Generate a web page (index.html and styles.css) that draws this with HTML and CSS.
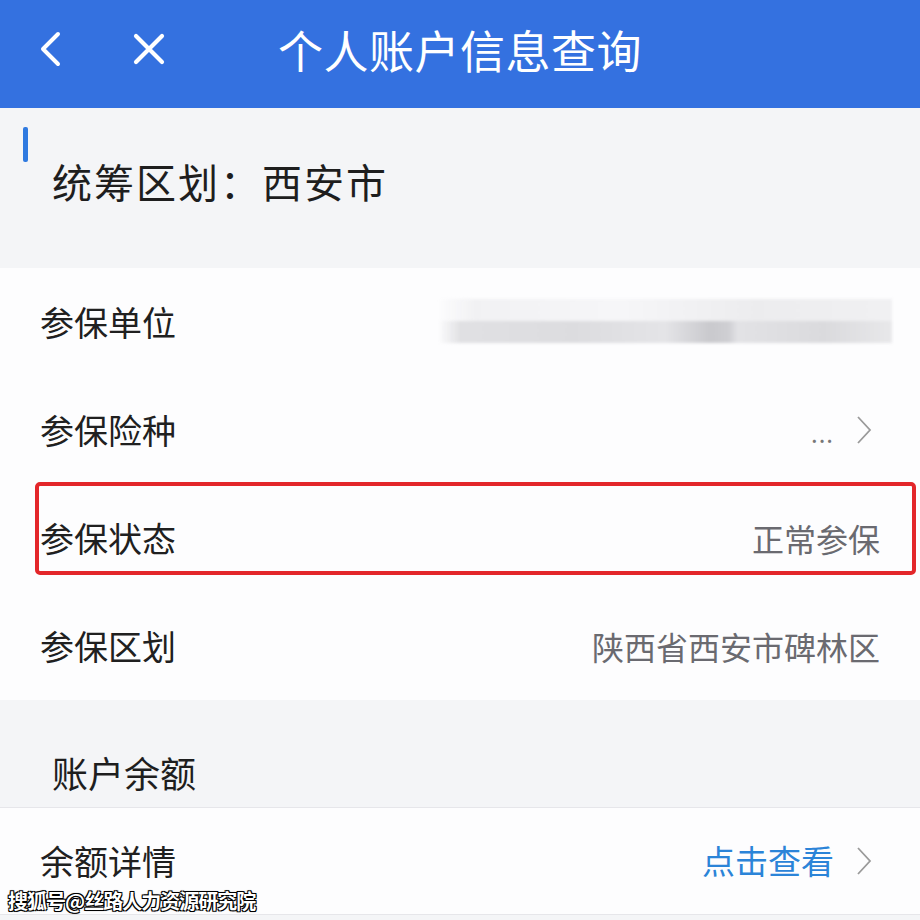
FILE: index.html
```html
<!DOCTYPE html>
<html lang="zh-CN">
<head>
<meta charset="utf-8">
<title>个人账户信息查询</title>
<link rel="stylesheet" href="styles.css">
</head>
<body>
<div class="page">
  <header class="topbar">
    <div class="nav-icons">
      <svg class="icon-back" width="24" height="36" viewBox="0 0 24 36"><polyline points="20,3 5,18 20,33" fill="none" stroke="#fff" stroke-width="4" stroke-linecap="round" stroke-linejoin="round"/></svg>
      <svg class="icon-close" width="32" height="32" viewBox="0 0 32 32"><path d="M3 3 L29 29 M29 3 L3 29" fill="none" stroke="#fff" stroke-width="4.2" stroke-linecap="round"/></svg>
    </div>
    <h1 class="title">个人账户信息查询</h1>
    <div></div>
  </header>

  <section class="region">
    <div class="accent"></div>
    <div class="region-text">统筹区划：西安市</div>
  </section>

  <section class="card">
    <div class="row">
      <span class="label">参保单位</span>
      <span class="blurred"><span class="blur-top"></span><span class="blur-bottom"></span></span>
    </div>
    <div class="row with-chev">
      <span class="label">参保险种</span>
      <span class="value more">...</span>
      <svg class="chev" width="16" height="30" viewBox="0 0 16 30"><polyline points="2,2 14,15 2,28" fill="none" stroke="#9a9a9a" stroke-width="1.8"/></svg>
    </div>
    <div class="row highlighted">
      <span class="label">参保状态</span>
      <span class="value">正常参保</span>
      <div class="mark"></div>
    </div>
    <div class="row">
      <span class="label">参保区划</span>
      <span class="value">陕西省西安市碑林区</span>
    </div>
  </section>

  <section class="group-head">
    <div class="group-text">账户余额</div>
  </section>

  <section class="card card-bottom">
    <div class="row with-chev">
      <span class="label">余额详情</span>
      <span class="value link">点击查看</span>
      <svg class="chev" width="16" height="30" viewBox="0 0 16 30"><polyline points="2,2 14,15 2,28" fill="none" stroke="#9a9a9a" stroke-width="1.8"/></svg>
    </div>
  </section>

  <div class="watermark">搜狐号@丝路人力资源研究院</div>
</div>
</body>
</html>
```
FILE: styles.css
```css
html, body {
  margin: 0;
  padding: 0;
  background: #f4f5f7;
}
body {
  font-family: "Noto Sans CJK SC", "Noto Sans", sans-serif;
}
.page {
  position: relative;
  width: 920px;
  height: 920px;
  overflow: hidden;
  background: #f4f5f7;
}
.topbar {
  height: 108px;
  background: #3471e0;
  display: grid;
  grid-template-columns: 1fr auto 1fr;
  align-items: center;
  padding-bottom: 10px;
  box-sizing: border-box;
}
.nav-icons {
  display: flex;
  align-items: center;
  padding-left: 38px;
  gap: 71px;
}
.title {
  margin: 0;
  color: #fff;
  font-size: 45px;
  font-weight: 400;
  letter-spacing: 0.5px;
  line-height: 1;
}
.region {
  height: 160px;
  padding-top: 19px;
  box-sizing: border-box;
}
.accent {
  width: 5px;
  height: 35px;
  margin-left: 23px;
  background: #2f7ae0;
  border-radius: 2px;
}
.region-text {
  margin-left: 52px;
  font-size: 40px;
  letter-spacing: 2px;
  line-height: 38px;
  color: #1e1e1e;
}
.card {
  background: #fdfdfe;
}
.row {
  position: relative;
  height: 108px;
  display: flex;
  align-items: center;
  padding: 0 40px;
  box-sizing: border-box;
}
.row.with-chev {
  padding-right: 48px;
}
.label {
  font-size: 34px;
  line-height: 1.2;
  color: #202020;
  flex: 1;
}
.value {
  font-size: 32px;
  line-height: 1.2;
  color: #6a6a70;
}
.more {
  font-size: 24px;
  color: #777;
  margin-right: 22px;
  letter-spacing: 1px;
  padding-top: 6px;
}
.link {
  font-size: 33px;
  color: #2b84d8;
  margin-right: 22px;
}
.blurred {
  width: 454px;
  height: 44px;
  margin-right: -12px;
  margin-top: -2px;
  display: flex;
  flex-direction: column;
  filter: blur(1.5px);
}
.blur-top {
  height: 22px;
  background: linear-gradient(to right, rgba(235,235,238,0) 0%, #f1f1f3 8%, #f6f6f8 40%, #ececee 70%, #f0f0f2 100%);
}
.blur-bottom {
  height: 22px;
  background: linear-gradient(to right, rgba(220,220,224,0) 0%, #e0e0e3 5%, #dcdcdf 30%, #e4e4e7 50%, #c9c9cd 60%, #cfcfd3 64%, #e2e2e5 66%, #dadadd 85%, #e8e8ea 100%);
}
.mark {
  position: absolute;
  top: -2px;
  left: 35px;
  right: 4px;
  height: 93px;
  border: 4px solid #e3262a;
  border-radius: 5px;
  box-sizing: border-box;
}
.group-head {
  height: 108px;
  padding-top: 54px;
  box-sizing: border-box;
  border-bottom: 1px solid #e6e6ea;
}
.group-text {
  margin-left: 52px;
  font-size: 36px;
  line-height: 36px;
  color: #1e1e1e;
}
.card-bottom .row {
  height: 107px;
  border-bottom: 1px solid #e6e6ea;
}
.watermark {
  position: absolute;
  left: 8px;
  bottom: 8px;
  font-size: 20px;
  line-height: 22px;
  font-weight: 700;
  color: #fff;
  letter-spacing: -1px;
  text-shadow: -1px -1px 0 #000, 1px -1px 0 #000, -1px 1px 0 #000, 1px 1px 0 #000, 0 0 2px #000;
}
```
